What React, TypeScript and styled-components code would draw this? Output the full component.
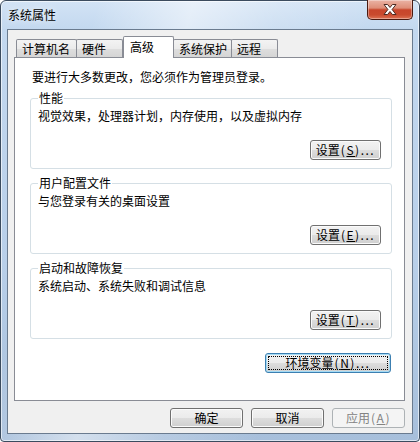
import React from "react";
import styled, { createGlobalStyle } from "styled-components";

const GlobalStyle = createGlobalStyle`
  html, body { margin: 0; padding: 0; background: #ffffff; }
  body {
    font-family: "Noto Sans CJK SC", "Noto Sans", sans-serif;
    font-size: 12px;
    color: #000;
  }
  * { box-sizing: border-box; }
`;

const Window = styled.div`
  width: 420px;
  height: 442px;
  border: 1px solid #3b4b5e;
  border-radius: 6px 6px 4px 4px;
  padding: 0 6px 7px 6px;
  display: flex;
  flex-direction: column;
  background:
    linear-gradient(105deg, rgba(255,255,255,0) 18%, rgba(255,255,255,0.5) 36%, rgba(255,255,255,0.18) 52%, rgba(255,255,255,0) 70%),
    linear-gradient(180deg, #d2e3f5 0px, #c3d8ef 29px, #b8cfe9 60%, #a7bfdb 100%);
  box-shadow: inset 0 0 0 1px rgba(255, 255, 255, 0.6);
`;

const TitleBar = styled.div`
  height: 28px;
  flex: none;
  display: flex;
  justify-content: space-between;
  align-items: flex-start;
`;

const Title = styled.span`
  align-self: center;
  padding-left: 1px;
  line-height: 16px;
  text-shadow: 0 0 6px rgba(255, 255, 255, 0.95);
`;

const CloseButton = styled.div`
  width: 46px;
  height: 20px;
  margin-top: -1px;
  border: 1px solid #4a1a10;
  border-top: none;
  border-radius: 0 0 5px 5px;
  display: flex;
  align-items: center;
  justify-content: center;
  background: linear-gradient(180deg, #eab3a5 0%, #de8e78 42%, #c8452b 52%, #c94a2e 78%, #dd7354 100%);
  box-shadow: inset 0 0 0 1px rgba(255, 255, 255, 0.35);
`;

const Client = styled.div`
  flex: 1;
  border: 1px solid #6a7b8f;
  background: #f0f0f0;
  padding: 6px 7px 0 6px;
  display: flex;
  flex-direction: column;
`;

const TabRow = styled.div`
  display: flex;
  align-items: flex-end;
  height: 21px;
  padding-left: 2px;
  position: relative;
  z-index: 1;
`;

const Tab = styled.div<{ $active?: boolean; $w: number; $first?: boolean }>`
  width: ${(p) => p.$w}px;
  height: ${(p) => (p.$active ? 22 : 18)}px;
  margin-bottom: ${(p) => (p.$active ? -1 : 0)}px;
  margin-left: ${(p) => (p.$first || p.$active ? 0 : -1)}px;
  padding-left: ${(p) => (p.$active ? 6 : 5)}px;
  padding-bottom: ${(p) => (p.$active ? 2 : 0)}px;
  border: 1px solid #898c95;
  border-bottom: none;
  border-radius: 2px 2px 0 0;
  display: flex;
  align-items: center;
  line-height: 16px;
  white-space: nowrap;
  background: ${(p) =>
    p.$active
      ? "#ffffff"
      : "linear-gradient(180deg, #f3f3f3 0%, #ebebeb 50%, #dedede 51%, #d5d5d5 100%)"};
`;

const Panel = styled.div`
  height: 344px;
  flex: none;
  border: 1px solid #898c95;
  background: #ffffff;
  padding: 0 12px 0 15px;
  display: flex;
  flex-direction: column;
`;

const Intro = styled.div`
  margin: 11px 0 0 2px;
  line-height: 16px;
  white-space: nowrap;
`;

const Group = styled.fieldset`
  margin: 5px 0 0 0;
  padding: 0 10px 8px 7px;
  border: 1px solid #d5dfe5;
  border-radius: 3px;
  min-width: 0;
  display: flex;
  flex-direction: column;
  & + & {
    margin-top: 6px;
  }
`;

const Legend = styled.legend`
  padding: 0 1px;
  line-height: 16px;
`;

const GroupText = styled.div`
  margin-top: 2px;
  line-height: 16px;
  white-space: nowrap;
`;

const Ascii = styled.span`
  letter-spacing: 1.5px;
  margin-left: 1px;
`;

const Button = styled.button<{ $w: number; $focus?: boolean }>`
  position: relative;
  width: ${(p) => p.$w}px;
  height: 20px;
  padding: 0;
  font: inherit;
  font-size: 12px;
  line-height: 16px;
  color: #000;
  border: 1px solid ${(p) => (p.$focus ? "#3c7fb1" : "#707070")};
  border-radius: 3px;
  background: linear-gradient(180deg, #f2f2f2 0%, #ebebeb 50%, #dddddd 51%, #cfcfcf 100%);
  box-shadow: inset 0 0 0 1px ${(p) => (p.$focus ? "#a4dbf5" : "#fbfbfb")};
  white-space: nowrap;
  &:disabled {
    border-color: #adb2b5;
    background: #f4f4f4;
    color: #838383;
    box-shadow: none;
  }
`;

const FocusRing = styled.span`
  position: absolute;
  inset: 2px;
  border: 1px dotted #000;
  border-radius: 1px;
  pointer-events: none;
`;

const GroupButton = styled(Button)`
  align-self: flex-end;
  margin-top: 16px;
`;

const EnvButton = styled(Button)`
  align-self: flex-end;
  margin: 14px 1px 0 0;
`;

const Footer = styled.div`
  display: flex;
  justify-content: flex-end;
  gap: 8px;
  margin-top: 7px;
`;

const CloseGlyph = () => (
  <svg width="14" height="11" viewBox="0 0 14 11">
    <polygon
      points="1,0.5 4.6,0.5 7,3.5 9.4,0.5 13,0.5 9.1,5.5 13,10.5 9.4,10.5 7,7.5 4.6,10.5 1,10.5 4.9,5.5"
      fill="#ffffff"
      stroke="#4b2a22"
      strokeWidth="1"
      strokeLinejoin="round"
    />
  </svg>
);

const Accel = ({ k, dots }: { k: string; dots?: boolean }) => (
  <Ascii>
    (<u>{k}</u>){dots ? "..." : ""}
  </Ascii>
);

const tabs = [
  { label: "计算机名", w: 61 },
  { label: "硬件", w: 47 },
  { label: "高级", w: 51, active: true },
  { label: "系统保护", w: 59 },
  { label: "远程", w: 47 },
];

const groups = [
  { title: "性能", text: "视觉效果，处理器计划，内存使用，以及虚拟内存", key: "S" },
  { title: "用户配置文件", text: "与您登录有关的桌面设置", key: "E" },
  { title: "启动和故障恢复", text: "系统启动、系统失败和调试信息", key: "T" },
];

export default function App() {
  return (
    <>
      <GlobalStyle />
      <Window>
        <TitleBar>
          <Title>系统属性</Title>
          <CloseButton>
            <CloseGlyph />
          </CloseButton>
        </TitleBar>
        <Client>
          <TabRow>
            {tabs.map((t, i) => (
              <Tab key={t.label} $w={t.w} $active={t.active} $first={i === 0}>
                {t.label}
              </Tab>
            ))}
          </TabRow>
          <Panel>
            <Intro>要进行大多数更改，您必须作为管理员登录。</Intro>
            {groups.map((g) => (
              <Group key={g.title}>
                <Legend>{g.title}</Legend>
                <GroupText>{g.text}</GroupText>
                <GroupButton $w={71}>
                  设置<Accel k={g.key} dots />
                </GroupButton>
              </Group>
            ))}
            <EnvButton $w={126} $focus>
              环境变量<Accel k="N" dots />
              <FocusRing />
            </EnvButton>
          </Panel>
          <Footer>
            <Button $w={73}>确定</Button>
            <Button $w={73}>取消</Button>
            <Button $w={73} disabled>
              应用<Accel k="A" />
            </Button>
          </Footer>
        </Client>
      </Window>
    </>
  );
}
